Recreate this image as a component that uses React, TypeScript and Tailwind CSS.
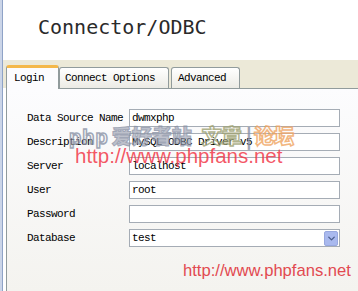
import { ChevronDown } from 'lucide-react';

const rows = [
  { label: 'Data Source Name', value: 'dwmxphp' },
  { label: 'Description', value: 'MySQL ODBC Driver v5' },
  { label: 'Server', value: 'localhost' },
  { label: 'User', value: 'root' },
  { label: 'Password', value: '' },
];

const simsun = "font-['Liberation_Mono','DejaVu_Sans_Mono',monospace] text-[11px] tracking-[-0.6px] text-black";

export default function App() {
  return (
    <div className="relative flex w-[358px] h-[291px] overflow-hidden bg-white">
      <div className="w-[3px] h-full bg-[#cbd5e8] border-r border-[#8fa3c7]" />

      <div className="flex-1 flex flex-col">
        <div className="h-[60px] bg-white pl-[35px] pt-[15px]">
          <h1 className="font-['DejaVu_Sans_Mono',monospace] text-[20px] leading-[24px] text-[#2a2a2a]">
            Connector/ODBC
          </h1>
        </div>

        <div className="flex items-end h-[28px] pl-[3px] bg-[#ece9d8]">
          <div className={`relative z-10 -mb-px h-[24px] w-[53px] pl-[7px] pt-[2px] bg-[#fcfcfe] border-x border-[#919b9c] border-t-[3px] border-t-[#f4b84a] rounded-t-[3px] ${simsun}`}>
            Login
          </div>
          <div className={`h-[21px] w-[110px] pl-[5px] pt-[2px] bg-gradient-to-b from-white to-[#ecebe5] border-x border-t border-[#919b9c] rounded-t-[3px] ${simsun}`}>
            Connect Options
          </div>
          <div className={`ml-[2px] h-[21px] w-[69px] pl-[6px] pt-[2px] bg-gradient-to-b from-white to-[#ecebe5] border-x border-t border-[#919b9c] rounded-t-[3px] ${simsun}`}>
            Advanced
          </div>
        </div>

        <div className="flex-1 ml-[3px] border-l border-t border-[#919b9c] bg-gradient-to-b from-[#fcfcfe] to-[#f4f3ef] pl-[20px] pt-[20px]">
          <div className="flex flex-col gap-[6px]">
            {rows.map((row) => (
              <div key={row.label} className="flex items-center h-[18px]">
                <span className={`w-[102px] ${simsun}`}>{row.label}</span>
                <div className={`w-[211px] h-[18px] border border-[#a5acb5] bg-white pl-[2px] leading-[16px] ${simsun}`}>
                  {row.value}
                </div>
              </div>
            ))}
            <div className="flex items-center h-[18px]">
              <span className={`w-[102px] ${simsun}`}>Database</span>
              <div className={`flex items-center justify-between w-[211px] h-[18px] border border-[#a5acb5] bg-white pl-[2px] pr-px ${simsun}`}>
                <span>test</span>
                <span className="flex items-center justify-center w-[14px] h-[15px] rounded-[2px] bg-[#a9b9ee] border border-[#98a8df]">
                  <ChevronDown className="w-[11px] h-[11px] text-[#4a5d8c]" strokeWidth={3} />
                </span>
              </div>
            </div>
          </div>
        </div>
      </div>

      {/* watermark overlays */}
      <div className="absolute left-[69px] top-[124px] flex items-baseline font-['Noto_Sans_CJK_SC',sans-serif] font-black text-[20px] leading-[24px] opacity-80 pointer-events-none">
        <span className="font-['Liberation_Sans',sans-serif] text-white/40 [-webkit-text-stroke:1.5px_#8a92a6] tracking-[1px]">php</span>
        <span className="ml-[3px] text-[#9aa0b0]/80 [-webkit-text-stroke:1px_#8a92a6]">爱好者站</span>
        <span className="ml-[10px] text-white/30 [-webkit-text-stroke:1.5px_#9ea272]">文章</span>
        <span className="ml-[4px] text-[#8a92a6]">|</span>
        <span className="ml-[2px] text-white/30 [-webkit-text-stroke:1.5px_#f0a460]">论坛</span>
      </div>
      <div className="absolute left-[75px] top-[144px] font-['Liberation_Sans',sans-serif] text-[20.5px] leading-[24px] text-[#f23a4a]/85 pointer-events-none">
        http://www.phpfans.net
      </div>
      <div className="absolute left-[183px] top-[260px] font-['Liberation_Sans',sans-serif] text-[16.6px] leading-[22px] text-[#e24a50] pointer-events-none">
        http://www.phpfans.net
      </div>
    </div>
  );
}
